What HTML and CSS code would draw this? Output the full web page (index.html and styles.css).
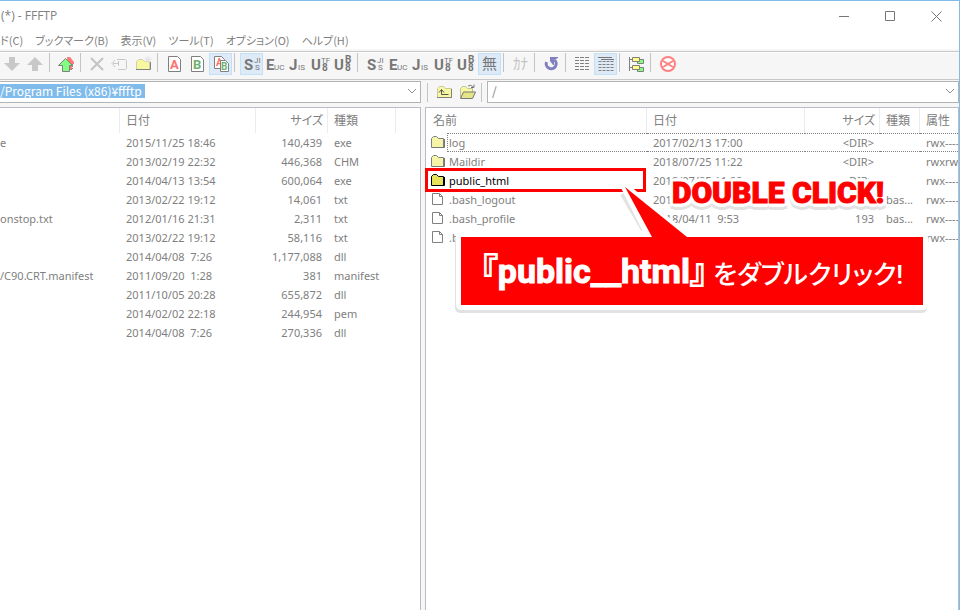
FILE: index.html
```html
<!DOCTYPE html>
<html lang="ja">
<head>
<meta charset="utf-8">
<title>(*) - FFFTP</title>
<link rel="stylesheet" href="styles.css">
</head>
<body>
<svg class="defs" aria-hidden="true">
  <defs>
    <symbol id="folder" viewBox="0 0 16 14"><path d="M1.500 12.500V3.500L3.500 1.500H6.500L8.500 3.500H13.500V12.500Z" fill="#f6f4a8" stroke="#808080"/><path d="M2 12.500H14.500V4" fill="none" stroke="#777"/></symbol>
    <symbol id="folder-strong" viewBox="0 0 16 14"><path d="M1.500 12.500V3.500L3.500 1.500H6.500L8.500 3.500H13.500V12.500Z" fill="#e6e25a" stroke="#000"/><path d="M2 12.500H14.500V4" fill="none" stroke="#000"/></symbol>
    <symbol id="file" viewBox="0 0 16 14"><path d="M2.500 1.500H9.500L12.500 4.500V12.500H2.500ZM9.500 1.500V4.500H12.500" fill="#fff" stroke="#808080"/></symbol>
    <symbol id="chevron" viewBox="0 0 10 6"><path d="M1 1L5 5L9 1" fill="none" stroke="#909090"/></symbol>
    <symbol id="sjis" viewBox="0 0 22 20"><text x="4" y="16" class="g-big">S</text><text x="14" y="9" class="g-small">JI</text><text x="15" y="16" class="g-small">S</text></symbol>
    <symbol id="euc" viewBox="0 0 22 20"><text x="3" y="16" class="g-big">E</text><text x="11" y="16" class="g-small">UC</text></symbol>
    <symbol id="jis" viewBox="0 0 22 20"><text x="3" y="16" class="g-big">J</text><text x="12" y="16" class="g-small">IS</text></symbol>
    <symbol id="utf8" viewBox="0 0 22 20"><text x="2" y="16" class="g-big">U</text><text x="12" y="9" class="g-small">TF</text><text x="13" y="17" class="g-mid">8</text></symbol>
    <symbol id="utf8b" viewBox="0 0 22 20"><text x="2" y="16" class="g-big">U</text><text x="13" y="9" class="g-mid">B</text><text x="13" y="17" class="g-mid">8</text></symbol>
  </defs>
</svg>
<div class="window">
  <header class="titlebar">
    <h1>(*) - FFFTP</h1>
    <div class="controls">
      <button aria-label="最小化"><svg viewBox="0 0 11 11"><path d="M0 5.500H10"/></svg></button>
      <button aria-label="最大化"><svg viewBox="0 0 11 11"><path d="M.5.5H9.500V9.500H.5Z"/></svg></button>
      <button aria-label="閉じる"><svg viewBox="0 0 11 11"><path d="M.5.5L10.500 10.500M10.500.5L.5 10.500"/></svg></button>
    </div>
  </header>
  <nav class="menu">
    <button>ド(C)</button><button>ブックマーク(B)</button><button>表示(V)</button><button>ツール(T)</button><button>オプション(O)</button><button>ヘルプ(H)</button>
  </nav>
  <div class="toolbar" role="toolbar">
    <button aria-label="ダウンロード"><svg viewBox="0 0 22 20"><path d="M8 3h6v6h5l-8 8l-8-8h5z" fill="#c8c8c8"/></svg></button>
    <button aria-label="アップロード"><svg viewBox="0 0 22 20"><path d="M8 17h6v-6h5l-8-8l-8 8h5z" fill="#c8c8c8"/></svg></button>
    <i class="sep"></i>
    <button aria-label="ミラーリング"><svg viewBox="0 0 22 20"><path d="M12 3h3l4 5v2h-2v6h-4z" fill="#ff7878"/><path d="M17.500 10v5.500h-2" fill="none" stroke="#808080" stroke-dasharray="1 1"/><path d="M7.500 17.500v-6h-4L10.500 4.500L17.500 11.500h-3v6z" fill="#80ff80" stroke="#808080"/></svg></button>
    <i class="sep"></i>
    <button aria-label="削除"><svg viewBox="0 0 22 20"><path d="M5 4L17 16M17 4L5 16" stroke="#c4c4c4" stroke-width="2"/></svg></button>
    <button aria-label="名前変更"><svg viewBox="0 0 22 20"><path d="M8 5.500h8.500l1 1v8l-1 1H9M10 9.500H4M6 6l-3 3.500l3 3.500M9.500 7v5" fill="none" stroke="#c8c8c8"/></svg></button>
    <button aria-label="フォルダ作成"><svg viewBox="0 0 22 20"><path d="M4.500 15.500v-8l2-2h4l2 2h5v8z" fill="#f8f8a0" stroke="#d0d0a0"/><path d="M4 15.500h14.500V8" fill="none" stroke="#808080"/><path d="M16 2v7M12.500 5.500h7M13 3l6 5M19 3l-6 5" stroke="#e4e4e4"/></svg></button>
    <i class="sep"></i>
    <button aria-label="アスキー"><svg viewBox="0 0 22 20"><path d="M5.500 2.500h9l3 3v12h-12z" fill="#fff" stroke="#808080"/><text x="7" y="15" class="g-doc red">A</text></svg></button>
    <button aria-label="バイナリ"><svg viewBox="0 0 22 20"><path d="M5.500 2.500h9l3 3v12h-12z" fill="#fff" stroke="#808080"/><text x="7" y="15" class="g-doc green">B</text></svg></button>
    <button class="on" aria-label="自動判別"><svg viewBox="0 0 22 20"><path d="M5.500 2.500h7l3 3v9h-10z" fill="#fff" stroke="#808080"/><text x="7" y="12" class="g-mid red">A</text><path d="M11.500 6.500h5l3 3v8h-8z" fill="#fff" stroke="#808080"/><text x="12" y="16" class="g-mid green">B</text></svg></button>
    <i class="sep"></i>
    <button class="on" aria-label="ホスト Shift-JIS"><svg><use href="#sjis"/></svg></button>
    <button aria-label="ホスト EUC"><svg><use href="#euc"/></svg></button>
    <button aria-label="ホスト JIS"><svg><use href="#jis"/></svg></button>
    <button aria-label="ホスト UTF-8"><svg><use href="#utf8"/></svg></button>
    <button aria-label="ホスト UTF-8 BOM"><svg><use href="#utf8b"/></svg></button>
    <i class="sep"></i>
    <button aria-label="ローカル Shift-JIS"><svg><use href="#sjis"/></svg></button>
    <button aria-label="ローカル EUC"><svg><use href="#euc"/></svg></button>
    <button aria-label="ローカル JIS"><svg><use href="#jis"/></svg></button>
    <button aria-label="ローカル UTF-8"><svg><use href="#utf8"/></svg></button>
    <button aria-label="ローカル UTF-8 BOM"><svg><use href="#utf8b"/></svg></button>
    <button class="on" aria-label="無変換"><svg viewBox="0 0 22 20"><text x="4" y="15" class="g-kanji">無</text></svg></button>
    <i class="sep"></i>
    <button aria-label="カナ変換"><svg viewBox="0 0 22 20"><text x="4" y="15" class="g-kana">ｶﾅ</text></svg></button>
    <i class="sep"></i>
    <button aria-label="更新"><svg viewBox="0 0 22 20"><path d="M6.500 8A5 5 0 1 0 14.500 6" fill="none" stroke="#8080c0" stroke-width="3"/><path d="M10 3h8v1l-4 2v5h-1l-3-4z" fill="#8080c0"/></svg></button>
    <i class="sep"></i>
    <button aria-label="一覧"><svg viewBox="0 0 22 20"><path d="M6 3v14M11 3v14M16 3v14" stroke="#808080" stroke-width="4" stroke-dasharray="1 2"/></svg></button>
    <button class="on" aria-label="詳細"><svg viewBox="0 0 22 20"><path d="M4 3.500h14M7 5.500h13" stroke="#777"/><path d="M6 7v11M10 7v11M14 7v11M18 7v11" stroke="#808080" stroke-width="3" stroke-dasharray="1 2"/></svg></button>
    <i class="sep"></i>
    <button aria-label="フォルダ同時移動"><svg viewBox="0 0 22 20"><path d="M4.500 3v14M4 5.500h4M4 13.500h4" stroke="#808080"/><path d="M12.500 5.500h6v4h-6z" fill="#80ff80" stroke="#808080"/><path d="M12.500 13.500h6v4h-6z" fill="#80ff80" stroke="#808080"/><path d="M7.500 3.500h7v4h-7zM7.500 11.500h7v4h-7z" fill="#ffff80" stroke="#808080"/></svg></button>
    <i class="sep"></i>
    <button aria-label="中止"><svg viewBox="0 0 22 20"><circle cx="12" cy="10" r="7" fill="#fff" stroke="#ff8080" stroke-width="2"/><path d="M7 7l10 6M17 7l-10 6" stroke="#ff8080" stroke-width="2"/></svg></button>
  </div>
  <main class="panes">
    <section class="side local">
      <div class="address">
        <div class="combo">
          <input class="selected" aria-label="ローカルフォルダ" value="/Program Files (x86)¥ffftp">
          <button aria-label="履歴"><svg><use href="#chevron"/></svg></button>
        </div>
      </div>
      <div class="list">
        <table>
          <colgroup><col class="c-name"><col class="c-date"><col class="c-size"><col class="c-type"><col></colgroup>
          <thead><tr><th></th><th>日付</th><th class="num">サイズ</th><th>種類</th><th></th></tr></thead>
          <tbody>
            <tr><td>e</td><td>2015/11/25 18:46</td><td class="num">140,439</td><td>exe</td><td></td></tr>
            <tr><td></td><td>2013/02/19 22:32</td><td class="num">446,368</td><td>CHM</td><td></td></tr>
            <tr><td></td><td>2014/04/13 13:54</td><td class="num">600,064</td><td>exe</td><td></td></tr>
            <tr><td></td><td>2013/02/22 19:12</td><td class="num">14,061</td><td>txt</td><td></td></tr>
            <tr><td>onstop.txt</td><td>2012/01/16 21:31</td><td class="num">2,311</td><td>txt</td><td></td></tr>
            <tr><td></td><td>2013/02/22 19:12</td><td class="num">58,116</td><td>txt</td><td></td></tr>
            <tr><td></td><td>2014/04/08  7:26</td><td class="num">1,177,088</td><td>dll</td><td></td></tr>
            <tr><td>/C90.CRT.manifest</td><td>2011/09/20  1:28</td><td class="num">381</td><td>manifest</td><td></td></tr>
            <tr><td></td><td>2011/10/05 20:28</td><td class="num">655,872</td><td>dll</td><td></td></tr>
            <tr><td></td><td>2014/02/02 22:18</td><td class="num">244,954</td><td>pem</td><td></td></tr>
            <tr><td></td><td>2014/04/08  7:26</td><td class="num">270,336</td><td>dll</td><td></td></tr>
          </tbody>
        </table>
      </div>
    </section>
    <section class="side remote">
      <div class="address">
        <i class="sep"></i>
        <button class="tool" aria-label="上のフォルダへ"><svg viewBox="0 0 22 20"><path d="M4.500 15.500v-9l2-2h4l2 2h6v9z" fill="#f8f8a0" stroke="#c8c8a0"/><path d="M4 15.500h14.500V7" fill="none" stroke="#808080"/><path d="M8.500 8v4.500h7M6 10.500l2.500-3l2.500 3" fill="none" stroke="#555"/></svg></button>
        <button class="tool" aria-label="フォルダを開く"><svg viewBox="0 0 22 20"><path d="M4.500 16V6.500l2-2h3l2 2h5V10" fill="#f8f8a0" stroke="#c0c0a0"/><path d="M4.500 16.500l3-6.500h12l-3 6.500z" fill="#e4e488" stroke="#777"/><path d="M12 4q3-2 5 1M18 2.500v3h-3" fill="none" stroke="#777"/></svg></button>
        <i class="sep"></i>
        <div class="combo">
          <input aria-label="ホストフォルダ" value="/">
          <button aria-label="履歴"><svg><use href="#chevron"/></svg></button>
        </div>
      </div>
      <div class="list">
        <table>
          <colgroup><col class="c-name"><col class="c-date"><col class="c-size"><col class="c-type"><col></colgroup>
          <thead><tr><th>名前</th><th>日付</th><th class="num">サイズ</th><th>種類</th><th>属性</th></tr></thead>
          <tbody>
            <tr class="focus"><td><div class="name"><svg><use href="#folder"/></svg><span>log</span></div></td><td>2017/02/13 17:00</td><td class="num">&lt;DIR&gt;</td><td></td><td>rwx------</td></tr>
            <tr><td><div class="name"><svg><use href="#folder"/></svg><span>Maildir</span></div></td><td>2018/07/25 11:22</td><td class="num">&lt;DIR&gt;</td><td></td><td>rwxrwx---</td></tr>
            <tr class="target"><td><div class="name"><svg><use href="#folder-strong"/></svg><span>public_html</span></div></td><td>2018/07/25 11:22</td><td class="num">&lt;DIR&gt;</td><td></td><td>rwx------</td></tr>
            <tr><td><div class="name"><svg><use href="#file"/></svg><span>.bash_logout</span></div></td><td>2018/04/11  9:53</td><td class="num">18</td><td>bas...</td><td>rwx------</td></tr>
            <tr><td><div class="name"><svg><use href="#file"/></svg><span>.bash_profile</span></div></td><td>2018/04/11  9:53</td><td class="num">193</td><td>bas...</td><td>rwx------</td></tr>
            <tr><td><div class="name"><svg><use href="#file"/></svg><span>.bashrc</span></div></td><td>2018/04/11  9:53</td><td class="num">231</td><td>bas...</td><td>rwx------</td></tr>
          </tbody>
        </table>
      </div>
      <div class="marker"></div>
      <div class="banner"><strong>『public__html』</strong><span>をダブルクリック!</span></div>
      <svg class="pointer" viewBox="0 0 80 56"><path d="M6 13L27 49" stroke="#e2e2e2" stroke-width="4"/><path d="M36 60L9 6L76 60" fill="#fff" stroke="#fff" stroke-width="8" stroke-linejoin="round"/><path d="M9 6L36 56H71Z" fill="#f00"/></svg>
      <p class="shout">DOUBLE CLICK!</p>
    </section>
  </main>
</div>
</body>
</html>
```
FILE: styles.css
```css
* { box-sizing: border-box; }

body {
  margin: 0;
  color: #808080;
  background: #fff;
  font: 12px/17px "Noto Sans", "Noto Sans CJK JP", sans-serif;
}

button, input {
  margin: 0;
  padding: 0;
  border: 0;
  background: none;
  color: inherit;
  font: inherit;
}

.defs { position: absolute; width: 0; height: 0; }

.window {
  display: flex;
  flex-direction: column;
  min-height: 100vh;
  border-top: 1px solid #7fbcec;
  border-right: 1px solid #7fbcec;
}

.titlebar {
  display: flex;
  justify-content: space-between;
  height: 30px;
}

h1 {
  margin: 0;
  padding-left: 1px;
  font: 12px/30px "Open Sans", sans-serif;
}

.controls { display: flex; }
.controls button { width: 46px; display: grid; place-items: center; }
.controls svg { width: 11px; height: 11px; fill: none; stroke: #777; }

.menu {
  display: flex;
  gap: 12px;
  height: 18px;
  font: 11px/18px "Noto Sans CJK JP", sans-serif;
  font-feature-settings: "palt";
}

.toolbar {
  display: flex;
  height: 31px;
  padding: 4px 0 4px 1px;
  background: linear-gradient(#f6f6f6 2px, #c8c8c8 2px 3px, #fff 3px 4px, #f6f6f6 4px);
  border-bottom: 1px solid #c8c8c8;
}

.toolbar button, .tool { flex: none; width: 23px; height: 22px; display: grid; place-items: center start; }
.toolbar svg, .tool svg { width: 22px; height: 20px; }
.toolbar .on { background: #deebf7; box-shadow: inset 0 0 0 1px #c2e0f8; }
.sep { flex: none; width: 6px; height: 19px; border-left: 1px solid #c4c4c4; }
.toolbar .sep { margin-left: 2px; }

.g-big, .g-mid, .g-small, .g-doc, .g-kanji { fill: #777; }
.g-big { font: bold 15px "Roboto", sans-serif; }
.g-mid { font: bold 10px "Roboto", sans-serif; }
.g-small { font: 8px "Roboto", sans-serif; }
.g-doc { font: bold 13px "Roboto", sans-serif; }
.g-kanji { font: 15px "Noto Sans CJK JP", sans-serif; }
.g-kana { font: 15px "Noto Sans CJK JP", sans-serif; fill: #c4c4c4; }
.red { fill: #ff7070; }
.green { fill: #70b070; }

.panes {
  flex: 1;
  display: grid;
  grid-template-columns: minmax(0, 421fr) minmax(0, 534fr);
  gap: 4px;
  background: #f6f6f6;
}

.side { position: relative; display: flex; flex-direction: column; }

.address { display: flex; height: 27px; padding-top: 1px; }
.address .sep { margin: 2px 0 0 2px; }

.combo {
  flex: 1;
  display: flex;
  align-items: center;
  min-width: 0;
  height: 22px;
  padding-bottom: 2px;
  background: #fff;
  border: 1px solid #b4b4b4;
  font: 12px/14px "Noto Sans CJK JP", sans-serif;
}
.local .combo { border-left: 0; }
.combo input { flex: 1; min-width: 0; height: 14px; padding-left: 4px; }
.combo .selected { flex: none; width: 145px; padding-left: 0; color: #fff; background: #7fbbeb; }
.combo button { margin-left: auto; width: 16px; display: grid; place-items: center; }
.combo button svg { width: 10px; height: 6px; }

.list {
  flex: 1;
  overflow: hidden;
  background: #fff;
  border: 1px solid #b9bcc3;
  border-bottom: 0;
}
.local .list { border-left: 0; }

table { width: 100%; table-layout: fixed; border-spacing: 0; }
.local .c-name { width: 120px; }
.local .c-date { width: 136px; }
.local .c-size { width: 72px; }
.local .c-type { width: 68px; }
.remote .c-name { width: 221px; }
.remote .c-date { width: 158px; }
.remote .c-size { width: 75px; }
.remote .c-type { width: 40px; }

th {
  height: 25px;
  padding: 0 0 2px 6px;
  border-right: 1px solid #ececec;
  text-align: left;
  font: 12px/22px "Noto Sans CJK JP", sans-serif;
  font-feature-settings: "palt";
}
th:last-child { border-right: 0; }
.remote th:first-child { padding-left: 7px; }

td {
  height: 19px;
  padding: 0 0 0 6px;
  border: 1px solid transparent;
  border-width: 1px 0;
  white-space: pre;
  overflow: hidden;
  font-size: 11px;
}
th.num { text-align: right; padding: 0 4px 2px 0; }
td.num { text-align: right; padding: 0 6px 0 0; }
.local td:first-child { padding-left: 0; }
.remote td:first-child { padding-left: 4px; border: 0; }

.name { display: flex; align-items: center; height: 19px; }
.name svg { flex: none; width: 16px; height: 14px; margin: 0 1px 1px 0; }
.name span { flex: 1; padding: 0 1px; border: 1px solid transparent; border-right: 0; }
.focus .name span, .focus td { border-color: #808080; border-style: dotted; }
.target .name { color: #000; }

/* Annotations laid over the file list */
.marker {
  position: absolute;
  top: 88px;
  left: 0;
  width: 221px;
  height: 24px;
  border: 3px solid #f00;
}

.banner {
  position: absolute;
  top: 152px;
  left: 31px;
  width: 472px;
  height: 78px;
  display: flex;
  align-items: center;
  justify-content: center;
  gap: 6px;
  white-space: nowrap;
  color: #fff;
  background: #f00 padding-box;
  border: 5px solid #fff;
  border-radius: 5px;
  box-shadow: -1px 3px 0 #e2e2e2;
  font-family: "Roboto", "Noto Sans CJK JP", sans-serif;
  font-feature-settings: "palt";
}
.banner strong { font-size: 34px; line-height: 68px; -webkit-text-stroke: 1px #fff; }
.banner span { font-size: 26px; line-height: 60px; font-weight: 500; padding-top: 8px; }

.pointer { position: absolute; top: 101px; left: 191px; width: 80px; height: 56px; }

.shout {
  position: absolute;
  top: 95px;
  left: 247px;
  margin: 0;
  white-space: nowrap;
  color: #f00;
  font: 900 30px/36px "Roboto", sans-serif;
  -webkit-text-stroke: 1px #f00;
  text-shadow:
    4px 0 #fff, -4px 0 #fff, 0 4px #fff, 0 -4px #fff,
    3px 3px #fff, -3px 3px #fff, 3px -3px #fff, -3px -3px #fff,
    0 7px #e2e2e2, 3px 6px #e2e2e2, -3px 6px #e2e2e2;
}
```
